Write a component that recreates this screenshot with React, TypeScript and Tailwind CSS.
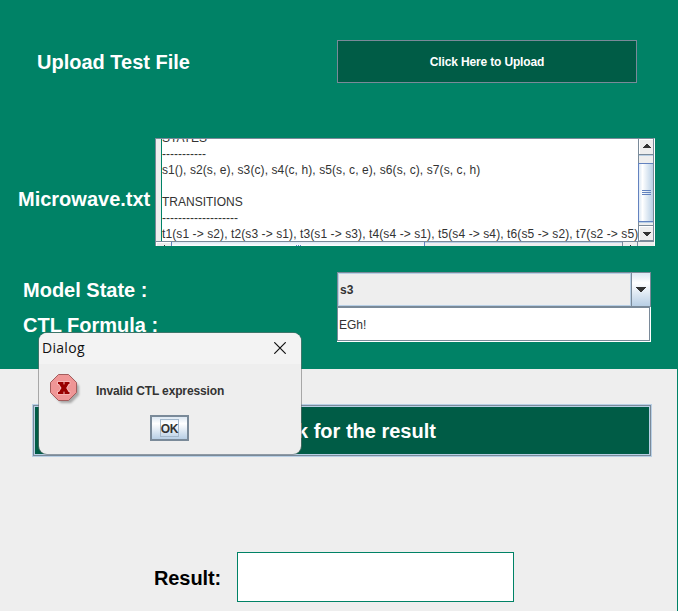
import React from "react";

const fileLines = [
  "STATES",
  "-----------",
  "s1(), s2(s, e), s3(c), s4(c, h), s5(s, c, e), s6(s, c), s7(s, c, h)",
  "",
  "TRANSITIONS",
  "-------------------",
  "t1(s1 -> s2), t2(s3 -> s1), t3(s1 -> s3), t4(s4 -> s1), t5(s4 -> s4), t6(s5 -> s2), t7(s2 -> s5)",
];

function Arrow({ up = false }: { up?: boolean }) {
  return (
    <svg width="8" height="4" viewBox="0 0 8 4" shapeRendering="crispEdges" className={up ? "rotate-180" : ""}>
      <path d="M0 0H8V1H7V2H6V3H5V4H3V3H2V2H1V1H0Z" fill="#333" />
    </svg>
  );
}

function ComboArrow() {
  return (
    <svg width="10" height="5" viewBox="0 0 10 5" shapeRendering="crispEdges">
      <path d="M0 0H10V1H9V2H8V3H7V4H6V5H4V4H3V3H2V2H1V1H0Z" fill="#333" />
    </svg>
  );
}

function VerticalBar() {
  return (
    <div className="flex h-[102px] w-[16px] flex-col border-x border-[#7a8a99] bg-[#eeeeee]">
      <div className="flex h-[15px] justify-center border-l border-t border-white pt-[4px]">
        <Arrow up />
      </div>
      <div className="h-px bg-[#7a8a99]" />
      <div className="h-[8px] border-t border-[#b8cfe5]" />
      <div className="-ml-px flex h-[59px] flex-col items-center justify-center gap-px border-y border-l border-[#6382bf] bg-linear-to-r from-[#dce8f4] via-white via-25% to-[#b8cfe5]">
        <div className="h-px w-[9px] bg-[#6382bf]" />
        <div className="h-px w-[9px] bg-[#6382bf]" />
        <div className="h-px w-[9px] bg-[#6382bf]" />
      </div>
      <div className="h-[3px] border-t border-[#b8cfe5]" />
      <div className="h-px bg-[#7a8a99]" />
      <div className="flex h-[15px] justify-center border-b border-l border-t border-b-[#7a8a99] border-l-white border-t-white pt-[5px]">
        <Arrow />
      </div>
    </div>
  );
}

function HorizontalBar() {
  return (
    <div className="flex h-[5px] overflow-hidden border-t border-[#7a8a99] bg-[#eeeeee]">
      <div className="flex h-[4px] w-[15px] items-end justify-center border-l border-t border-white">
        <div className="h-px w-px bg-[#333]" />
      </div>
      <div className="h-[4px] w-px bg-[#6382bf]" />
      <div className="-mt-px flex h-[5px] w-[252px] items-end justify-center gap-px border-t border-[#6382bf] bg-linear-to-b from-[#dce8f4] to-white">
        <div className="h-px w-px bg-[#6382bf]" />
        <div className="h-px w-px bg-[#6382bf]" />
        <div className="h-px w-px bg-[#6382bf]" />
      </div>
      <div className="h-[4px] w-px bg-[#6382bf]" />
      <div className="h-[4px] w-[197px] border-t border-[#b8cfe5]" />
      <div className="flex h-[4px] w-[16px] items-end justify-center border-x border-[#7a8a99]">
        <div className="h-px w-px bg-[#333]" />
      </div>
    </div>
  );
}

function ErrorIcon() {
  return (
    <svg width="32" height="32" viewBox="0 0 32 32" className="overflow-visible">
      <defs>
        <filter id="soft" x="-20%" y="-20%" width="150%" height="150%">
          <feGaussianBlur stdDeviation="1.2" />
        </filter>
      </defs>
      <path d="M10 3H20L29 12V21L21 29H11L3 21V11Z" fill="#777" opacity=".6" filter="url(#soft)" />
      <path d="M8.500 .5H18.500L26.500 8.500V18.500L18.500 26.500H8.500L.5 18.500V8.500Z" fill="#ef9696" stroke="#a35d5d" />
      <path d="M8 8H13.500V10L14 10.800L14.500 10V8H19.500V10H18.600L16.200 14L18.600 18H19.500V20H14.500V18L14 17.200L13.500 18V20H8V18H9L11.500 14L9 10H8Z" fill="#990000" stroke="#f8bcbc" strokeWidth="1.6" paintOrder="stroke" />
    </svg>
  );
}

function ErrorDialog() {
  return (
    <div className="absolute left-[39px] top-[333px] flex h-[121px] w-[262px] flex-col overflow-hidden rounded-[8px] bg-[#eeeeee] shadow-[0_0_0_1px_rgba(110,110,110,0.55)]">
      <div className="flex h-[31px] items-center justify-between bg-[#f3f3f3] pb-px pl-[3px] pr-[15px]">
        <span className="whitespace-nowrap font-['Open_Sans',sans-serif] text-[14px] leading-[30px] tracking-[0.3px] text-[#111]">Dialog</span>
        <svg width="12" height="12" viewBox="0 0 12 12" fill="none" stroke="#111" strokeWidth="1.2">
          <path d="M.3 .3L11.700 11.700M11.700 .3L.3 11.700" />
        </svg>
      </div>
      <div className="flex h-[42px] pl-[11px] pt-[10px]">
        <ErrorIcon />
        <span className="ml-[14px] mt-[9px] whitespace-nowrap text-[12px] font-bold leading-[16px] tracking-[-0.14px] text-[#333]">Invalid CTL expression</span>
      </div>
      <button className="ml-[111px] mt-[9px] flex h-[26px] w-[39px] items-center justify-center border-2 border-[#7a8a99] bg-linear-to-b from-[#dde8f3] via-white via-30% to-[#b8cfe5]">
        <span className="flex h-[18px] w-[19px] items-center justify-center border border-[#a3b8cc] pt-[2px] text-[12px] font-bold leading-[16px] tracking-[-0.3px] text-[#333]">OK</span>
      </button>
    </div>
  );
}

export default function App() {
  return (
    <div className="relative h-[611px] w-[678px] overflow-hidden bg-[#eeeeee] font-['Liberation_Sans',Arial,sans-serif]">
      <section className="flex h-[369px] flex-col bg-[#008266] text-white">
        <div className="flex h-[138px] items-start pt-[40px]">
          <h1 className="ml-[37px] w-[300px] whitespace-nowrap text-[20px] font-bold leading-[45px]">Upload Test File</h1>
          <button className="h-[43px] w-[300px] border border-[#7a8a99] bg-[#005c46] text-[12px] font-bold tracking-[-0.15px]">Click Here to Upload</button>
        </div>
        <div className="flex h-[134px] items-start">
          <span className="ml-[18px] mt-[49px] w-[137px] whitespace-nowrap text-[20px] font-bold leading-[24px]">Microwave.txt</span>
          <div className="flex h-[108px] w-[500px] flex-col overflow-hidden border-l border-r border-t border-l-[#7a8a99] border-r-white border-t-[#7a8a99] bg-[#eeeeee]">
            <div className="flex h-[102px]">
              <div className="w-[5px] bg-[#eeeeee]" />
              <div className="w-[477px] overflow-hidden border-l border-[#008266] bg-white text-[#333]">
                <div className="-mt-[9px]">
                  {fileLines.map((line, i) => (
                    <div
                      key={i}
                      className={
                        line.includes("(")
                          ? "h-[16px] whitespace-pre text-[12px] leading-[16px] tracking-[0.095px]"
                          : "h-[16px] whitespace-pre text-[12px] leading-[16px]"
                      }
                    >
                      {line}
                    </div>
                  ))}
                </div>
              </div>
              <VerticalBar />
            </div>
            <HorizontalBar />
          </div>
        </div>
        <div className="flex">
          <div className="ml-[23px] w-[314px] whitespace-nowrap pt-px text-[20px] font-bold leading-[35px]">
            <div>Model State :</div>
            <div>CTL Formula :</div>
          </div>
          <div className="w-[314px] text-[12px] text-[#333]">
            <div className="flex h-[35px] border border-[#7a8a99]">
              <div className="flex flex-1 items-center border border-[#b8cfe5] bg-[#eeeeee] pl-px font-bold">s3</div>
              <div className="flex w-[19px] items-center justify-center border-l border-[#7a8a99] bg-linear-to-b from-[#dde8f3] via-white via-30% to-[#b8cfe5]">
                <ComboArrow />
              </div>
            </div>
            <div className="h-[35px] border-b border-r border-white">
              <div className="flex h-[34px] items-center border border-[#7a8a99] bg-white pl-px pt-[2px]">EGh!</div>
            </div>
          </div>
        </div>
      </section>
      <section className="h-[242px] border-r border-[#008266] pt-[35px]">
        <button className="ml-[32px] block h-[53px] w-[620px] border border-[#b8cfe5] bg-[#7a8a99] p-px">
          <span className="flex h-full items-center justify-center border border-[#b8cfe5] bg-[#005c46] text-[20px] font-bold text-white">Check for the result</span>
        </button>
        <div className="mt-[95px] flex items-center">
          <span className="ml-[154px] w-[83px] whitespace-nowrap pt-[2px] text-[20px] font-bold tracking-[-0.1px] text-black">Result:</span>
          <div className="h-[50px] w-[277px] border border-[#008266] bg-white" />
        </div>
      </section>
      <ErrorDialog />
    </div>
  );
}
